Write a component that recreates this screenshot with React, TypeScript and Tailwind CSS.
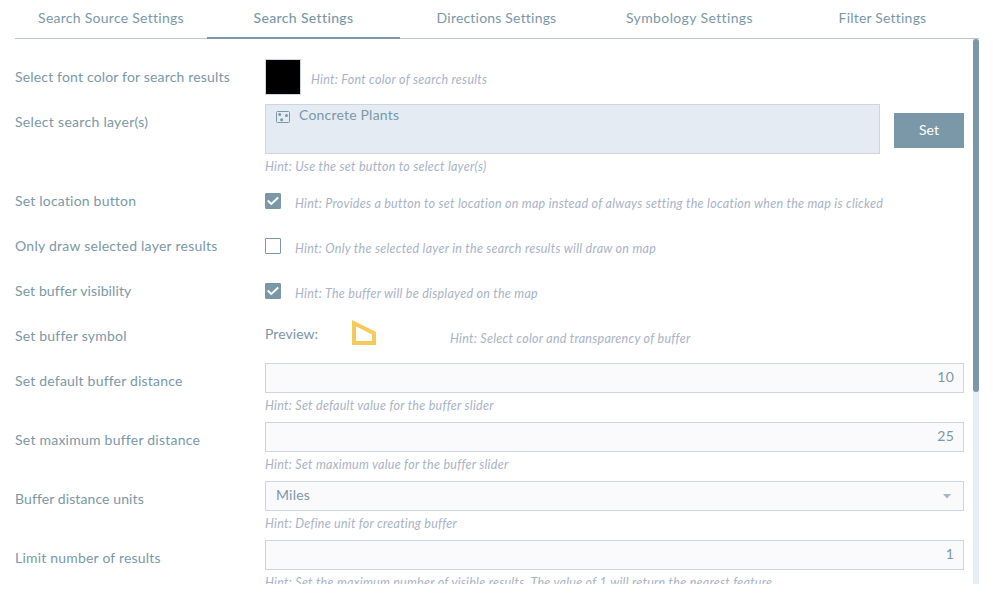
import type { ReactNode } from 'react';

const tabs = [
  { label: 'Search Source Settings', fit: 'tracking-[0.27px]' },
  { label: 'Search Settings', active: true, fit: 'tracking-[0.35px]' },
  { label: 'Directions Settings', fit: 'tracking-[0.2px]' },
  { label: 'Symbology Settings', fit: 'tracking-[0.38px]' },
  { label: 'Filter Settings', fit: 'tracking-[0.2px]' },
];

function Row({ label, fit = 'tracking-[0.2px]', height, children }: { label: string; fit?: string; height: string; children: ReactNode }) {
  return (
    <div className={`flex shrink-0 items-start ${height}`}>
      <div className="w-[250px] shrink-0 whitespace-nowrap pt-[13px] leading-5">
        <span className={fit}>{label}</span>
      </div>
      <div className="flex w-[699px] shrink-0">{children}</div>
    </div>
  );
}

function Hint({ children, fit = 'tracking-[0.27px]', pad = '' }: { children: string; fit?: string; pad?: string }) {
  return (
    <div className={`whitespace-nowrap text-[12.5px] italic leading-[17px] text-[#a9b3c6] ${pad}`}>
      <span className={fit}>Hint: {children}</span>
    </div>
  );
}

function Checkbox({ checked = false }: { checked?: boolean }) {
  return (
    <div className={`mt-[15px] size-4 shrink-0 rounded-[1px] border border-[#7b98a8] ${checked ? 'bg-[#7b98a8]' : 'bg-white'}`}>
      {checked && (
        <svg viewBox="0 0 14 14" className="size-3.5" fill="none" stroke="white" strokeWidth="2">
          <path d="M1.7 6.6 5.3 9.9 12.2 3.6" />
        </svg>
      )}
    </div>
  );
}

function Field({ value, hint, select = false, hintFit }: { value: string; hint: string; select?: boolean; hintFit?: string }) {
  return (
    <div className="flex w-full flex-col pt-[5px]">
      <div className={`flex h-[30px] items-center border border-[#d0d4e0] bg-[#fafafd] pb-0.5 pl-2.5 leading-5 ${select ? 'justify-between pr-3' : 'justify-end pr-[9px]'}`}>
        <span className="tracking-[0.2px]">{value}</span>
        {select && (
          <svg viewBox="0 0 8 5" className="mt-0.5 h-[5px] w-2" fill="#a9b3c6">
            <path d="M0 0h8L4 4.6z" />
          </svg>
        )}
      </div>
      <Hint pad="mt-1" fit={hintFit}>{hint}</Hint>
    </div>
  );
}

export default function App() {
  return (
    <div className="h-[597px] w-[993px] overflow-hidden bg-white pl-[15px] font-['Lato',sans-serif] text-[14px] text-[#7b98a8]">
      <div className="flex h-[39px] w-[964px] border-b border-[#bcc6d4]">
        {tabs.map((t) => (
          <div key={t.label} className={`flex h-[39px] justify-center whitespace-nowrap pt-2 leading-5 ${t.active ? 'w-[193px] shrink-0 border-b-2 border-[#7b98a8] font-medium' : t.label === 'Search Source Settings' ? 'w-48 shrink-0' : 'flex-1'}`}>
            <span className={t.fit}>{t.label}</span>
          </div>
        ))}
      </div>
      <div className="flex h-[545px] w-[964px] justify-between overflow-hidden">
        <div className="flex w-[949px] flex-col pt-[15px]">
          <Row label="Select font color for search results" fit="tracking-[0.17px]" height="h-[45px]">
            <div className="mt-[5px] size-9 border border-[#d0d4e0] bg-black" />
            <Hint pad="ml-2.5 mt-[17px]">Font color of search results</Hint>
          </Row>
          <Row label="Select search layer(s)" fit="tracking-[0.3px]" height="h-[79px]">
            <div className="flex w-full justify-between">
              <div className="w-[615px] pt-[5px]">
                <div className="flex h-[50px] border border-[#d0d4e0] bg-[#e4ebf3] pl-2.5">
                  <svg viewBox="0 0 14 12" className="mt-[6px] h-3 w-3.5" fill="#7b98a8">
                    <rect x=".5" y=".5" width="13" height="11" rx="1" fill="none" stroke="#7b98a8" />
                    <circle cx="3.7" cy="3.6" r="1.5" />
                    <circle cx="10.5" cy="4.6" r="1.5" />
                    <circle cx="5.6" cy="8.7" r="1.5" />
                  </svg>
                  <span className="ml-[9px] leading-5 tracking-[0.2px]">Concrete Plants</span>
                </div>
                <Hint pad="mt-1">Use the set button to select layer(s)</Hint>
              </div>
              <button className="mt-3.5 h-[35px] w-[70px] bg-[#7b98a8] pb-0.5 text-white">Set</button>
            </div>
          </Row>
          <Row label="Set location button" height="h-[45px]">
            <Checkbox checked />
            <Hint pad="ml-3.5 mt-[17px]">Provides a button to set location on map instead of always setting the location when the map is clicked</Hint>
          </Row>
          <Row label="Only draw selected layer results" fit="tracking-[0.25px]" height="h-[45px]">
            <Checkbox />
            <Hint pad="ml-3.5 mt-[17px]">Only the selected layer in the search results will draw on map</Hint>
          </Row>
          <Row label="Set buffer visibility" fit="tracking-[0.1px]" height="h-[45px]">
            <Checkbox checked />
            <Hint pad="ml-3.5 mt-[17px]">The buffer will be displayed on the map</Hint>
          </Row>
          <Row label="Set buffer symbol" height="h-[45px]">
            <div className="w-[87px] pt-[11px] leading-5 tracking-[0.05px]">Preview:</div>
            <svg viewBox="0 0 24 25" className="mt-[7px] h-[25px] w-6" fill="none" stroke="#f5ca5a" strokeWidth="4">
              <path d="M2 3.3V23H22V13.3Z" />
            </svg>
            <Hint pad="ml-[74px] mt-[17px]">Select color and transparency of buffer</Hint>
          </Row>
          <Row label="Set default buffer distance" height="h-[59px]">
            <Field value="10" hint="Set default value for the buffer slider" />
          </Row>
          <Row label="Set maximum buffer distance" fit="tracking-[0.24px]" height="h-[59px]">
            <Field value="25" hint="Set maximum value for the buffer slider" />
          </Row>
          <Row label="Buffer distance units" fit="tracking-[0.1px]" height="h-[59px]">
            <Field value="Miles" hint="Define unit for creating buffer" hintFit="tracking-[0.25px]" select />
          </Row>
          <Row label="Limit number of results" height="h-[59px]">
            <Field value="1" hint="Set the maximum number of visible results. The value of 1 will return the nearest feature" />
          </Row>
        </div>
        <div className="h-full w-1.5 bg-[#e6edf4]">
          <div className="h-[353px] rounded-[3px] bg-[#7b98a8]" />
        </div>
      </div>
    </div>
  );
}
